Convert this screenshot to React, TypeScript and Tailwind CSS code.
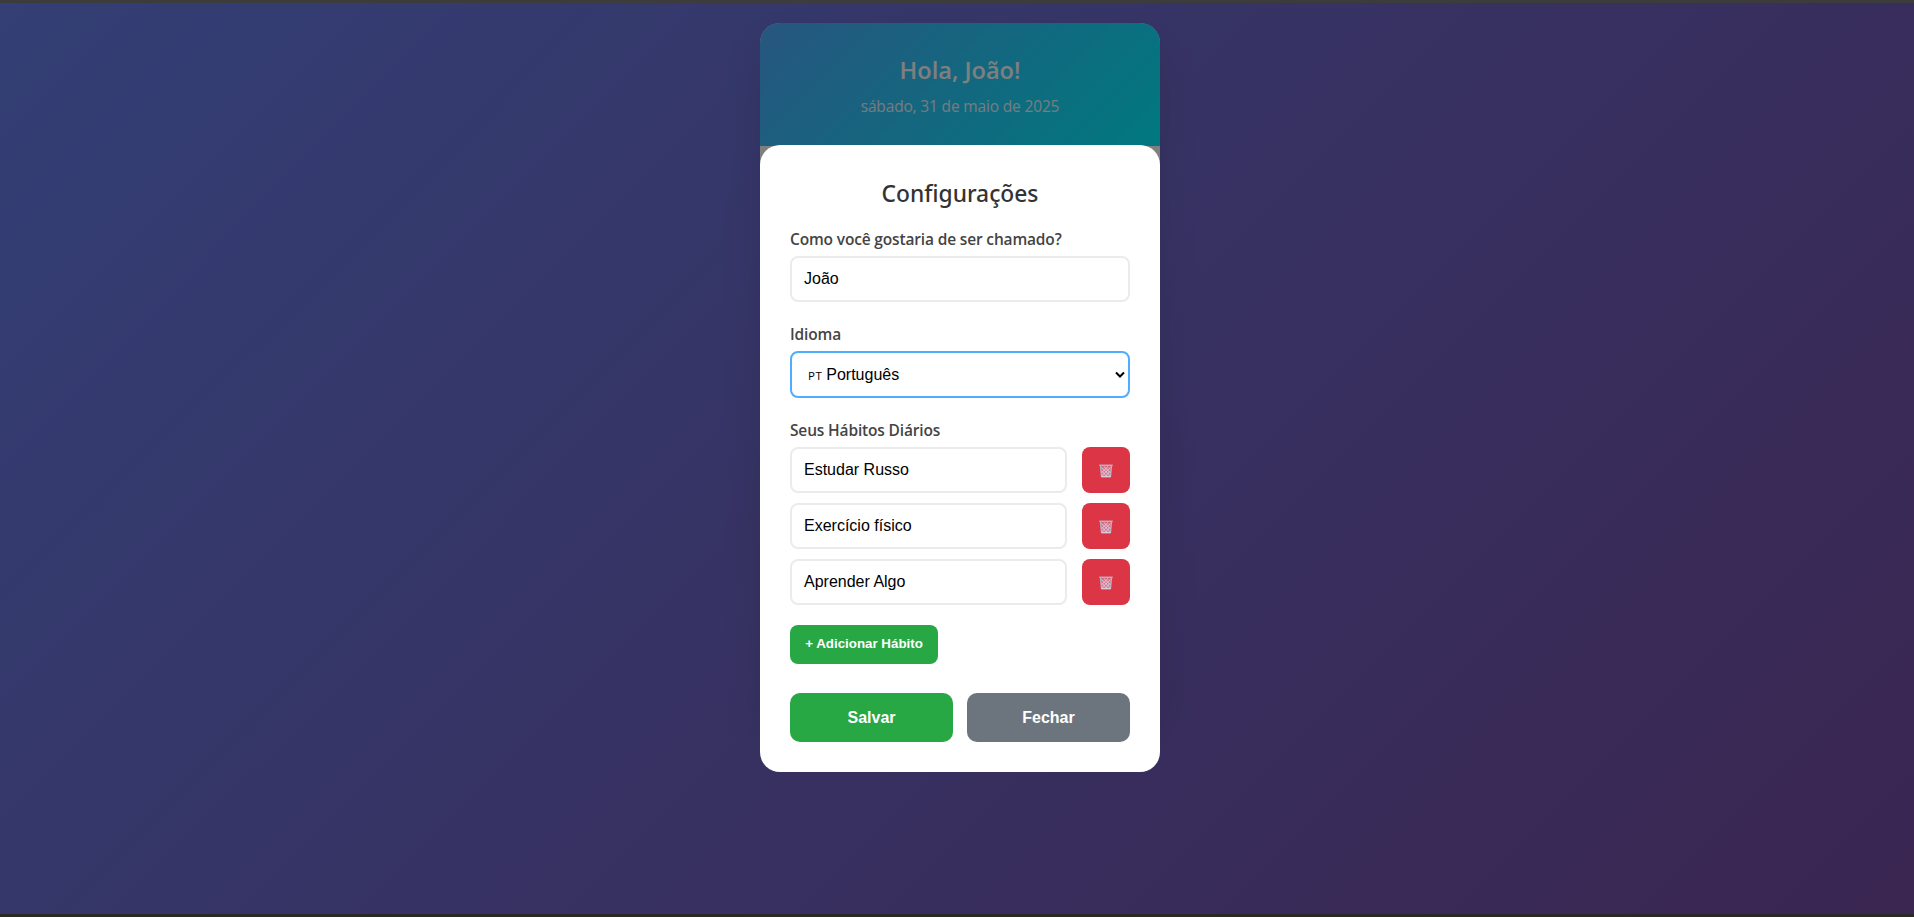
import React from "react";

const habits = ["Estudar Russo", "Exercício físico", "Aprender Algo"];

function TrashIcon() {
  return (
    <svg width="14" height="14" viewBox="0 0 14 14" fill="none">
      <path d="M1.3 2.2h11.4l-1 10.6H2.3z" fill="#dd6f83" />
      <path d="M2.6 3.6l8.4 8M4.8 2.4l6.6 6.4M2.6 7l5.2 5.4M11.4 3.6l-8.4 8M9.2 2.4L2.6 8.8M11.4 7l-5.2 5.4" stroke="#d9d6e6" strokeWidth="0.9" />
      <path d="M1.5 2l1 10.4M12.5 2l-1 10.4" stroke="#b4b2c8" strokeWidth="1.3" />
      <path d="M2.2 12.6h9.6" stroke="#d6d0de" strokeWidth="1.5" />
      <path d="M.3 1.3h13.4" stroke="#b7b4c6" strokeWidth="1.5" />
    </svg>
  );
}

function Label({ children }: { children: React.ReactNode }) {
  return (
    <div className="h-[22px] whitespace-nowrap font-['Open_Sans',sans-serif] text-[15.5px] leading-6 font-semibold tracking-[-0.16px] text-[#444]">
      {children}
    </div>
  );
}

function Field({ children }: { children: React.ReactNode }) {
  return (
    <div className="flex h-[46px] min-w-0 flex-1 items-center rounded-lg border-2 border-[#e9ecef] bg-white px-3 text-base text-black">
      {children}
    </div>
  );
}

export default function App() {
  return (
    <div className="h-[917px] overflow-hidden border-t-[3px] border-b-[3px] border-t-[#3c3c3c] border-b-[#2b2928] font-['Liberation_Sans',Arial,sans-serif]">
      <div className="relative flex h-[911px] justify-center bg-linear-[135deg,#667eea_0%,#764ba2_100%] pt-5 pl-[6px]">
        <div className="h-[690px] w-[400px] overflow-hidden rounded-[20px] bg-white shadow-[0_20px_40px_rgba(0,0,0,0.1)]">
          <header className="h-[123px] bg-linear-[135deg,#4facfe_0%,#00f2fe_100%] pt-[31px] text-center font-['Open_Sans',sans-serif] text-white">
            <h1 className="text-[23.6px] leading-8 font-semibold">Hola, João!</h1>
            <p className="mt-[9px] text-[15.5px] leading-[22px] tracking-[-0.16px] opacity-90">sábado, 31 de maio de 2025</p>
          </header>
        </div>
        <div className="absolute inset-0 flex justify-center bg-black/50 pt-[142.4px] pl-[6px]">
          <section className="h-[626.9px] w-[400px] rounded-[20px] bg-white px-[30px] pt-[33px]">
            <h2 className="h-[29px] text-center font-['Noto_Sans',sans-serif] text-[22.8px] leading-8 font-medium text-[#333]">
              Configurações
            </h2>
            <div className="mt-5">
              <Label>Como você gostaria de ser chamado?</Label>
              <div className="mt-[7px] flex">
                <Field>João</Field>
              </div>
            </div>
            <div className="mt-5">
              <Label>Idioma</Label>
              <div className="mt-[6.5px] flex h-[47.3px] items-center rounded-lg border-2 border-[#4facfe] bg-white pr-[3px] pl-4 text-base text-black">
                <span className="mt-[2px] mr-1 font-['Open_Sans',sans-serif] text-[11.5px] leading-none font-medium tracking-[0.5px]">PT</span>
                <span className="flex-1">Português</span>
                <svg width="10" height="8" viewBox="0 0 10 8" fill="none">
                  <path d="M1 1.5l4 4 4-4" stroke="#000" strokeWidth="2" />
                </svg>
              </div>
            </div>
            <div className="mt-5">
              <Label>Seus Hábitos Diários</Label>
              <div className="mt-[6.5px] flex flex-col gap-[10px]">
                {habits.map((habit) => (
                  <div key={habit} className="flex gap-[15px]">
                    <Field>{habit}</Field>
                    <button className="flex h-[46px] w-12 items-center justify-center rounded-lg bg-[#dc3545] pt-[2px]">
                      <TrashIcon />
                    </button>
                  </div>
                ))}
              </div>
              <button className="mt-5 flex h-[39.3px] w-[148px] items-center justify-center rounded-lg bg-[#28a745] text-[13.33px] font-bold whitespace-nowrap text-white">
                + Adicionar Hábito
              </button>
            </div>
            <div className="mt-[29.5px] flex gap-[14px]">
              <button className="h-[48.4px] flex-1 rounded-[10px] bg-[#28a745] text-base font-bold text-white">Salvar</button>
              <button className="h-[48.4px] flex-1 rounded-[10px] bg-[#6c757d] text-base font-bold text-white">Fechar</button>
            </div>
          </section>
        </div>
      </div>
    </div>
  );
}
